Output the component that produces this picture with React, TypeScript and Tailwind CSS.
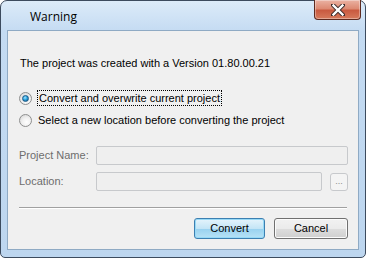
import React from "react";

function Radio({ checked }: { checked?: boolean }) {
  return (
    <div className="w-[13px] h-[13px] rounded-full border border-[#8e8f8f] bg-[radial-gradient(circle_at_60%_65%,#ffffff_0%,#f0f0f0_45%,#cfcfcf_100%)] flex items-center justify-center">
      {checked && (
        <div className="w-[7px] h-[7px] rounded-full bg-[radial-gradient(circle_at_40%_35%,#a8e3ff_0%,#2ca6e0_45%,#0c4b7a_100%)] border border-[#1d5a87]" />
      )}
    </div>
  );
}

export default function App() {
  const font = { fontFamily: '"Liberation Sans", Arial, sans-serif' };
  return (
    <div className="w-[366px] h-[258px] bg-white">
      <div className="w-[366px] h-[258px] rounded-t-[7px] rounded-b-[5px] border border-[#3c4b5e] bg-[linear-gradient(180deg,#dcebf9_0%,#c4dbf2_12%,#bdd6ef_100%)] flex flex-col px-[6px] pb-[7px]">
        <div className="h-[29px] flex items-start justify-between relative">
          <div className="pt-[7px] pl-[23px] text-[12px] text-black" style={{ fontFamily: '"Open Sans", "Noto Sans", sans-serif' }}>
            Warning
          </div>
          <div className="mr-[-2px] mt-[-1px] w-[47px] h-[20px] rounded-b-[4px] border border-[#5d2a20] border-t-0 bg-[linear-gradient(180deg,#eab2a3_0%,#dd8a73_45%,#c95a40_55%,#d67a5c_100%)] flex items-center justify-center shadow-[inset_0_0_0_1px_rgba(255,255,255,0.35)]">
            <svg width="14" height="12" viewBox="0 0 14 12">
              <path d="M2 1 L12 11 M12 1 L2 11" stroke="#3b2a2a" strokeWidth="4.2" strokeLinecap="square" />
              <path d="M2.5 1.5 L11.5 10.5 M11.5 1.5 L2.5 10.5" stroke="#ffffff" strokeWidth="2.4" strokeLinecap="square" />
            </svg>
          </div>
        </div>
        <div className="flex-1 border border-[#8faac4] bg-[#f0f0f0] flex flex-col text-[11px] text-black" style={font}>
          <div className="pl-[12px] pt-[26px] leading-[13px]">The project was created with a Version 01.80.00.21</div>
          <div className="pl-[11px] pt-[20px] flex flex-col gap-[7px]">
            <div className="flex items-center gap-[5px]">
              <Radio checked />
              <span className="border border-dotted border-black px-[1px] leading-[14px]">Convert and overwrite current project</span>
            </div>
            <div className="flex items-center gap-[6px]">
              <Radio />
              <span className="leading-[14px]">Select a new location before converting the project</span>
            </div>
          </div>
          <div className="pl-[11px] pr-[10px] pt-[19px] flex flex-col gap-[7px] text-[#6d6d6d]">
            <div className="flex items-center h-[19px]">
              <span className="w-[77px]">Project Name:</span>
              <div className="flex-1 h-[19px] rounded-[2px] border border-[#c7c9cc] bg-[#efefef]" />
            </div>
            <div className="flex items-center h-[19px]">
              <span className="w-[77px]">Location:</span>
              <div className="flex-1 h-[19px] rounded-[2px] border border-[#c7c9cc] bg-[#efefef]" />
              <div className="ml-[8px] w-[18px] h-[18px] rounded-[3px] border border-[#c7c9cc] bg-[#f4f4f4] flex items-center justify-center text-[9px] leading-none text-[#8d8d8d]">...</div>
            </div>
          </div>
          <div className="mx-[11px] mt-[16px] h-[1px] bg-[#a0a0a0] border-b border-white box-content" />
          <div className="flex justify-end gap-[9px] pr-[10px] pt-[9px]">
            <div className="w-[71px] h-[21px] rounded-[3px] border border-[#3c7fb1] bg-[linear-gradient(180deg,#e5f4fc_0%,#c4e5f6_50%,#98d1ef_51%,#b7e2f6_100%)] shadow-[inset_0_0_0_1px_#97d9f6] flex items-center justify-center text-black">Convert</div>
            <div className="w-[74px] h-[21px] rounded-[3px] border border-[#707070] bg-[linear-gradient(180deg,#f2f2f2_0%,#ebebeb_50%,#dddddd_51%,#cfcfcf_100%)] shadow-[inset_0_0_0_1px_#fbfbfb] flex items-center justify-center text-black">Cancel</div>
          </div>
        </div>
      </div>
    </div>
  );
}
